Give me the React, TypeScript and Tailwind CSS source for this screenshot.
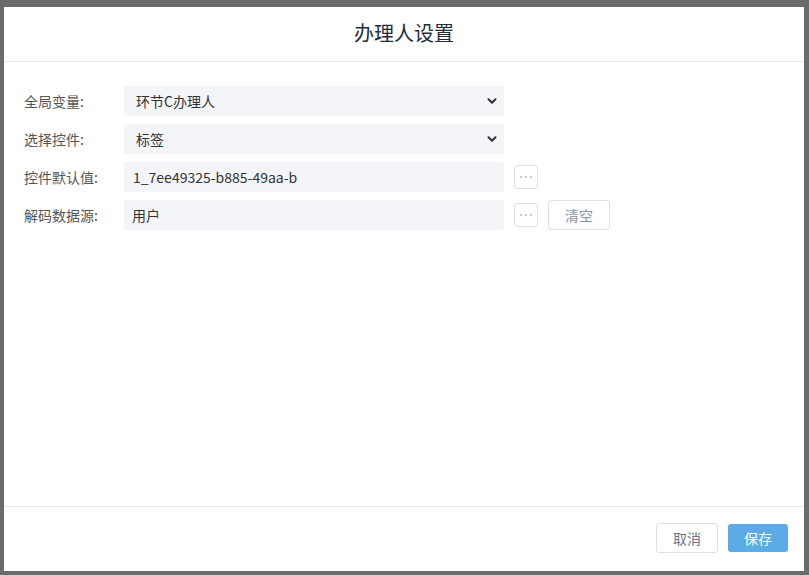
import React, { useState } from 'react';

const font = { fontFamily: '"Noto Sans CJK SC", "Noto Sans", sans-serif' };

const Chevron: React.FC = () => (
    <svg width="12" height="12" viewBox="0 0 12 12" className="pointer-events-none absolute right-[6px] top-1/2 -translate-y-1/2">
        <path d="M2.5 4.2 L6 7.8 L9.5 4.2" fill="none" stroke="#333" strokeWidth="2" strokeLinecap="round" strokeLinejoin="round" />
    </svg>
);

const DotsButton: React.FC = () => (
    <button
        type="button"
        className="ml-[10px] flex h-[24px] w-[24px] items-center justify-center rounded-[3px] border border-[#dcdfe6] bg-white"
    >
        <svg width="14" height="4" viewBox="0 0 14 4">
            <circle cx="2" cy="2" r="1" fill="#b4b8c0" />
            <circle cx="7" cy="2" r="1" fill="#b4b8c0" />
            <circle cx="12" cy="2" r="1" fill="#b4b8c0" />
        </svg>
    </button>
);

const App: React.FC = () => {
    const [variable, setVariable] = useState('环节C办理人');
    const [control, setControl] = useState('标签');
    const [defaultValue, setDefaultValue] = useState('1_7ee49325-b885-49aa-b');
    const [source, setSource] = useState('用户');

    return (
        <div className="h-[575px] w-[809px] bg-[#6b6b6b] pl-[4px] pt-[7px]" style={font}>
            <div className="flex h-[564px] w-[800px] flex-col bg-white">
                <div className="flex h-[55px] shrink-0 items-center justify-center border-b border-[#e4e4ea] pb-[2px]">
                    <h2 className="text-[20px] text-[#1f2d3d]">办理人设置</h2>
                </div>

                <div className="flex flex-1 flex-col gap-[8px] px-[20px] pt-[24px]">
                    <div className="flex items-center">
                        <label className="w-[100px] text-[14px] text-[#555]">全局变量:</label>
                        <div className="relative h-[30px] w-[380px]">
                            <select
                                value={variable}
                                onChange={(e) => setVariable(e.target.value)}
                                className="h-full w-full appearance-none rounded-[2px] bg-[#f4f5f9] pl-[12px] text-[14px] text-[#333] outline-none"
                            >
                                <option>环节C办理人</option>
                            </select>
                            <Chevron />
                        </div>
                    </div>

                    <div className="flex items-center">
                        <label className="w-[100px] text-[14px] text-[#555]">选择控件:</label>
                        <div className="relative h-[30px] w-[380px]">
                            <select
                                value={control}
                                onChange={(e) => setControl(e.target.value)}
                                className="h-full w-full appearance-none rounded-[2px] bg-[#f4f5f9] pl-[12px] text-[14px] text-[#333] outline-none"
                            >
                                <option>标签</option>
                            </select>
                            <Chevron />
                        </div>
                    </div>

                    <div className="flex items-center">
                        <label className="w-[100px] text-[14px] text-[#555]">控件默认值:</label>
                        <input
                            value={defaultValue}
                            onChange={(e) => setDefaultValue(e.target.value)}
                            className="h-[30px] w-[380px] rounded-[2px] bg-[#f4f5f9] px-[9px] text-[14px] text-[#333] outline-none"
                        />
                        <DotsButton />
                    </div>

                    <div className="flex items-center">
                        <label className="w-[100px] text-[14px] text-[#555]">解码数据源:</label>
                        <input
                            value={source}
                            onChange={(e) => setSource(e.target.value)}
                            className="h-[30px] w-[380px] rounded-[2px] bg-[#f4f5f9] px-[8px] text-[14px] text-[#333] outline-none"
                        />
                        <DotsButton />
                        <button
                            type="button"
                            onClick={() => setSource('')}
                            className="ml-[10px] h-[30px] w-[62px] rounded-[3px] border border-[#dcdfe6] bg-white text-[14px] text-[#8a93a6]"
                        >
                            清空
                        </button>
                    </div>
                </div>

                <div className="flex h-[65px] shrink-0 items-center justify-end gap-[10px] border-t border-[#e4e4ea] pb-[2px] pr-[16px]">
                    <button
                        type="button"
                        className="h-[30px] w-[62px] rounded-[3px] border border-[#dcdfe6] bg-white text-[14px] text-[#6b7487]"
                    >
                        取消
                    </button>
                    <button
                        type="button"
                        className="h-[28px] w-[60px] rounded-[3px] bg-[#5aabe6] text-[14px] text-white"
                    >
                        保存
                    </button>
                </div>
            </div>
        </div>
    );
};

export default App;
